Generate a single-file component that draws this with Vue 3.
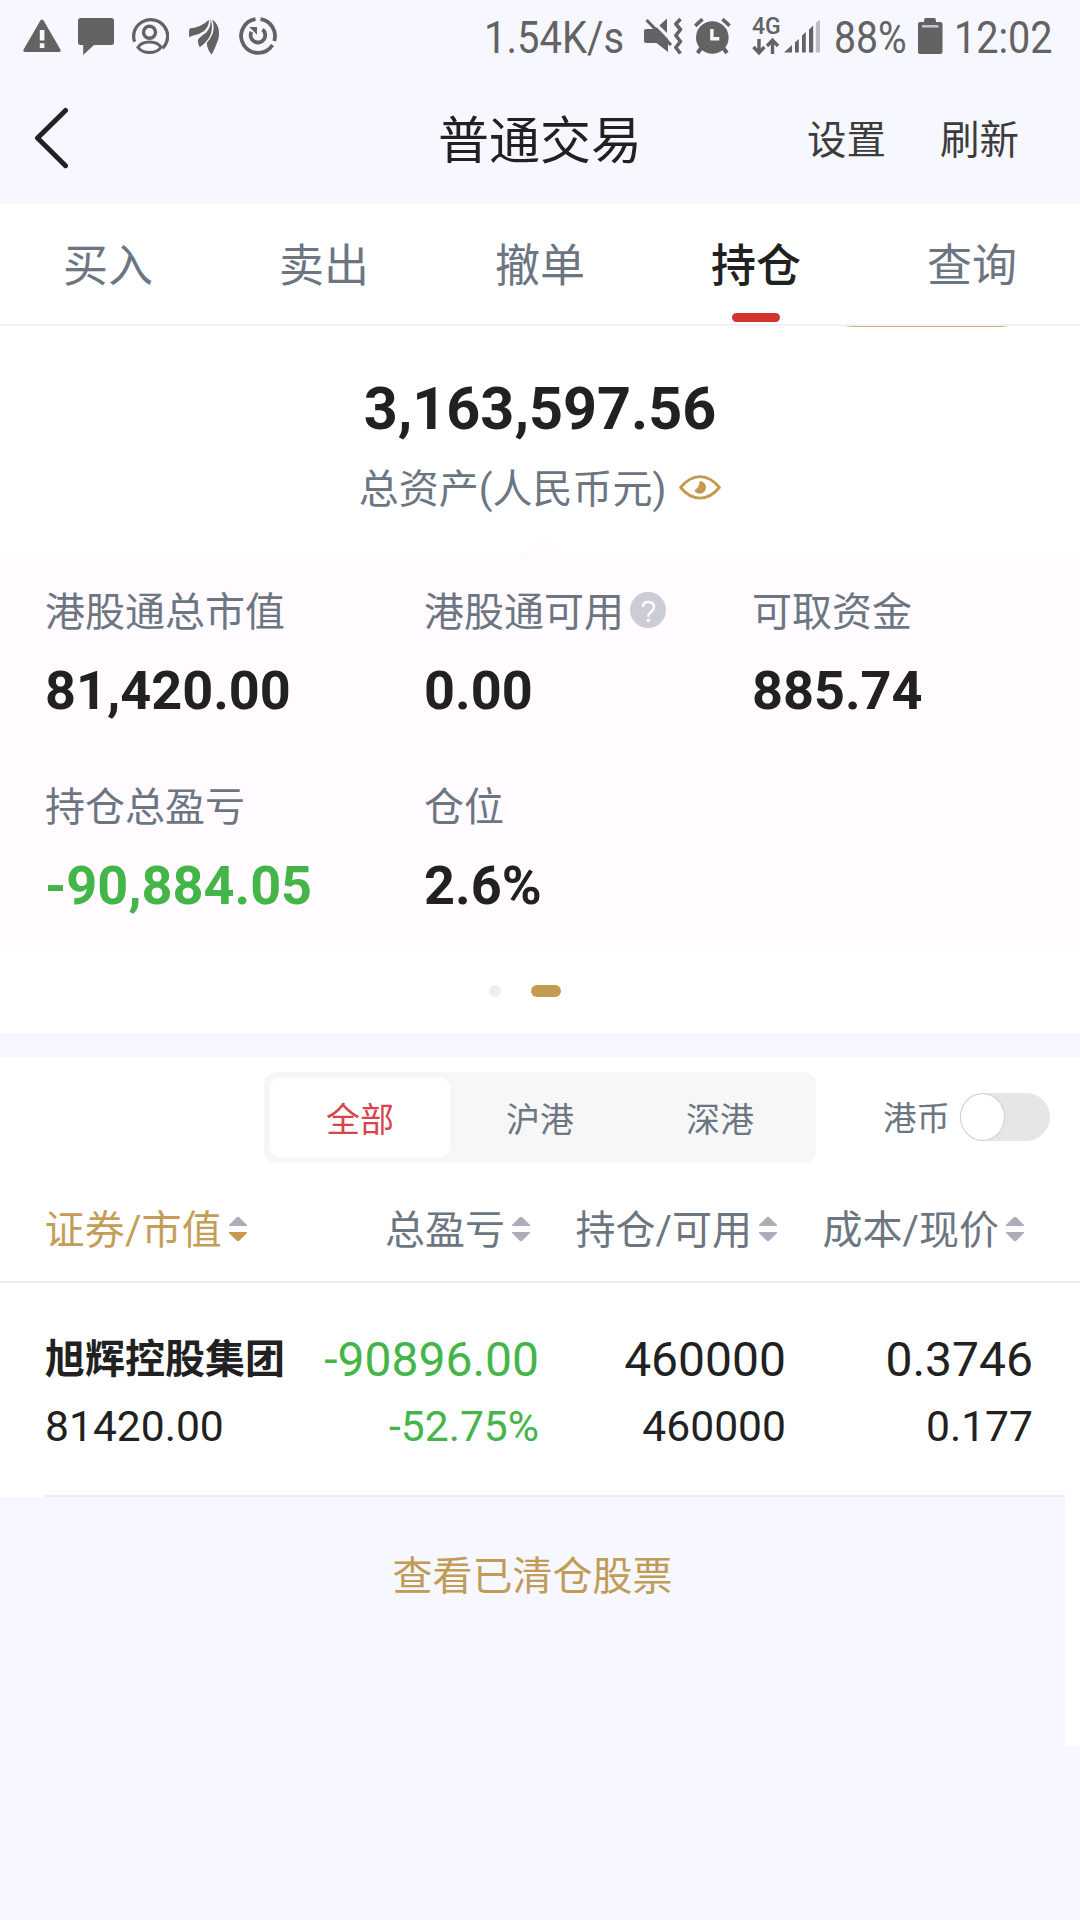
<script setup>
const tabs = ['买入', '卖出', '撤单', '持仓', '查询']
const activeTab = '持仓'
const metrics = [
  { label: '港股通总市值', value: '81,420.00' },
  { label: '港股通可用', value: '0.00', help: true },
  { label: '可取资金', value: '885.74' },
  { label: '持仓总盈亏', value: '-90,884.05', down: true },
  { label: '仓位', value: '2.6%' },
]
const markets = ['全部', '沪港', '深港']
const columns = ['证券/市值', '总盈亏', '持仓/可用', '成本/现价']
</script>

<template>
  <div class="page">
    <div class="status">
      <div class="status-left">
        <svg class="ic-warn" width="38" height="34" viewBox="0 0 38 34">
          <path d="M19 0.5 Q20 0.5 20.6 1.6 L37.4 30.6 Q38.4 33 36.2 33 H1.8 Q-.4 33 .6 30.6 L17.4 1.6 Q18 .5 19 .5Z" fill="#636363" />
          <path d="M16.8 11h4.6v10.600h-4.600zM16.800 24.300h4.600v4.600h-4.600z" fill="#f7f7ff" />
        </svg>
        <svg class="ic-chat" width="36" height="37" viewBox="0 0 36 37">
          <path d="M2.500 0H33.500Q36 0 36 2.500V24.500Q36 27 33.500 27H16L5.200 37V27H2.500Q0 27 0 24.500V2.500Q0 0 2.500 0Z" fill="#636363" />
        </svg>
        <svg class="ic-user" width="38" height="37" viewBox="0 0 38 37" fill="none" stroke="#636363">
          <path d="M3.600 23.800A17 16.600 0 1 1 31.500 30.200" stroke-width="3.300" />
          <circle cx="18.500" cy="14.300" r="6" stroke-width="3.400" />
          <path d="M7 29.300Q10 24 18.500 24T30 29.300Q26 34.500 18.500 34.500T7 29.300Z" stroke-width="3" />
        </svg>
        <svg class="ic-leaf" width="31" height="36" viewBox="0 0 31 36" fill="#636363">
          <path d="M.4 18.600Q-.4 13 .6 9.600Q13 8 19.800.8Q20.600 7 14.800 12.200Q10 15.500 4.500 16.500Q1.400 17.200.4 18.600Z" />
          <path d="M21.200 0Q23 7 17.200 13.500Q8.800 19.500 8.800 21.500Q8.800 25 10.800 28.200Q19.800 22 22.300 13.500Q24 5 21.200 0Z" />
          <path d="M23.200.6Q25.800 7 23.700 14.500Q21.500 20 17.800 23.800Q18 31 22.800 35.600Q28 25 29.600 19Q31.600 6 23.200.6Z" />
        </svg>
        <svg class="ic-sync" width="38" height="38" viewBox="0 0 38 38" fill="none" stroke="#636363">
          <path d="M16.500 2.100A17 17 0 1 0 33.500 28" stroke-width="3.800" />
          <path d="M21.500 2.100A17 17 0 0 1 35.200 24" stroke-width="3.800" />
          <path d="M23.500 12.500A7.300 7.300 0 1 1 12.500 14.800" stroke-width="3.800" />
          <path d="M10.200 10H18V17.800Z" fill="#636363" stroke="none" />
        </svg>
      </div>
      <div class="status-right">
        <span class="st st-speed">1.54K/s</span>
        <svg class="ic-mute" width="39" height="37" viewBox="0 0 39 37">
          <path d="M0 13Q0 11 2 11H8L13 9.500L24 21V34L12.500 25H2Q0 25 0 23Z" fill="#636363" />
          <path d="M23 .5V15L15.300 7.500Z" fill="#636363" />
          <path d="M2.500 2L27 27" stroke="#636363" stroke-width="3.200" />
          <path d="M36.500 1L31.800 6L36.500 11.500L31.800 17.500L36.500 23.500L31.800 29.500L36.500 35.500" fill="none" stroke="#636363" stroke-width="3.600" stroke-linejoin="round" />
        </svg>
        <svg class="ic-alarm" width="37" height="37" viewBox="0 0 37 37">
          <circle cx="18.300" cy="19.500" r="16.300" fill="#636363" />
          <path d="M1.200 7.800L8.500 1.200M28.500 1.200L35.600 7.800" stroke="#636363" stroke-width="3.600" />
          <path d="M8 29L3.500 35M28.500 29L33 35" stroke="#636363" stroke-width="4" />
          <path d="M17.900 11V20.700H25.300" fill="none" stroke="#f7f7ff" stroke-width="3.400" />
        </svg>
        <div class="net">
          <span class="g4">4G</span>
          <svg width="28" height="19" viewBox="0 0 28 19" fill="none" stroke="#636363" stroke-width="3.400">
            <path d="M7 2V15M1.500 10L7 15.800L12.500 10M20.500 17V4M15 9L20.500 3.200L26 9" />
          </svg>
        </div>
        <svg class="ic-signal" width="37" height="36" viewBox="0 0 37 36" fill="#636363">
          <path d="M0 34.500L8 27V34.500ZM11 24.500L14.800 21V34.500H11ZM18 17.500L21.800 14V34.500H18ZM25 11.500L29.200 7.500V34.500H25Z" />
          <path d="M31.800 4.500L36 2V34.500H31.800Z" fill="#bdbdc1" />
        </svg>
        <span class="st st-pct">88%</span>
        <svg class="ic-bat" width="25" height="36" viewBox="0 0 25 36">
          <path d="M7.500 0H16.500Q18 0 18 4H22.500Q24.500 4 24.500 6V34Q24.500 36 22.500 36H2Q0 36 0 34V6Q0 4 2 4H6Q6 0 7.500 0Z" fill="#636363" />
          <path d="M4 7H20.500V9.600H4Z" fill="#c4c4c8" />
        </svg>
        <span class="st st-time">12:02</span>
      </div>
    </div>

    <header class="head">
      <svg class="back" width="36" height="64" viewBox="0 0 36 64" fill="none" stroke="#222" stroke-width="5" stroke-linecap="round" stroke-linejoin="round">
        <path d="M31.500 4.500L3.500 32L31.500 59.700" />
      </svg>
      <h1>普通交易</h1>
      <div class="actions"><span>设置</span><span>刷新</span></div>
    </header>

    <nav class="tabs">
      <div v-for="t in tabs" :key="t" class="tab" :class="{ active: t === activeTab }">
        <span>{{ t }}</span>
      </div>
    </nav>
    <div class="peek"></div>

    <section class="total">
      <div class="amount">3,163,597.56</div>
      <div class="caption">
        <span>总资产(人民币元)</span>
        <svg width="42" height="25" viewBox="0 0 42 25">
          <path d="M1.600 12.500Q10.500 1.600 21 1.600T40.400 12.500Q31.500 23.200 21 23.200T1.600 12.500Z" fill="none" stroke="#c49a50" stroke-width="2.800" stroke-linejoin="round" />
          <path d="M20.500 6.300A6.200 6.200 0 1 1 15.300 15.200Q20.500 12.500 20.500 6.300Z" fill="#c49a50" />
        </svg>
      </div>
      <svg class="notch" width="36" height="17" viewBox="0 0 36 17"><path d="M0 17L15.500 1.500Q18 -.5 20.500 1.500L36 17Z" fill="#fffbff" /></svg>
    </section>

    <section class="metrics">
      <div v-for="m in metrics" :key="m.label" class="metric">
        <div class="label">{{ m.label }}<i v-if="m.help" class="help">
          <svg width="36" height="36" viewBox="0 0 36 36">
            <circle cx="18" cy="18" r="18" fill="#cbccd5" />
            <path d="M12.800 15Q12.800 10 18.300 10T24 15Q24 17.500 21 20Q18.300 22 18.300 24.800" fill="none" stroke="#fff" stroke-width="2.400" />
            <circle cx="18.300" cy="28.300" r="1.800" fill="#fff" />
          </svg>
        </i></div>
        <div class="value" :class="{ down: m.down }">{{ m.value }}</div>
      </div>
    </section>

    <div class="dots"><i class="dot"></i><i class="dot on"></i></div>
    <div class="band"></div>

    <section class="filter">
      <div class="seg">
        <span v-for="(m, i) in markets" :key="m" :class="{ on: i === 0 }">{{ m }}</span>
      </div>
      <span class="hkd">港币</span>
      <div class="switch"><i></i></div>
    </section>

    <div class="cols">
      <div v-for="(c, i) in columns" :key="c" class="col" :class="{ sorted: i === 0 }">
        <span>{{ c }}</span>
        <svg width="18" height="26" viewBox="0 0 18 26">
          <path d="M0 10V9L7.500 1.500Q9 .2 10.500 1.500L18 9V10Z" fill="#acadb9" />
          <path d="M0 16V17L7.500 24.500Q9 25.800 10.500 24.500L18 17V16Z" :fill="i === 0 ? '#c49a50' : '#acadb9'" />
        </svg>
      </div>
    </div>

    <div class="row">
      <div class="cell name"><b>旭辉控股集团</b><small>81420.00</small></div>
      <div class="cell loss"><span>-90896.00</span><small>-52.75%</small></div>
      <div class="cell"><span>460000</span><small>460000</small></div>
      <div class="cell"><span>0.3746</span><small>0.177</small></div>
    </div>
    <div class="rest">
      <div class="cleared">查看已清仓股票</div>
    </div>
  </div>
</template>

<style>
body { margin: 0; background: #f7f7ff; }
</style>

<style scoped>
.page {
  width: 1080px; height: 1920px; overflow: hidden; background: #f7f7ff; color: #212121;
  font-family: Roboto, "Noto Sans CJK SC", sans-serif;
}
svg { display: block; flex: none; }
.status { height: 74px; display: flex; justify-content: space-between; color: #636363; }
.status-left, .status-right { display: flex; align-items: flex-start; }
.status-left { padding-left: 23px; }
.ic-warn { margin-top: 19px; }
.ic-chat { margin: 18px 0 0 17px; }
.ic-user { margin: 18px 0 0 17px; }
.ic-leaf { margin: 19px 0 0 20px; }
.ic-sync { margin: 17px 0 0 19px; }
.st {
  font-size: 44px; line-height: 44px; margin-top: 16px; display: block;
  white-space: nowrap; transform-origin: 0 50%; transform: scaleX(.9); flex: none;
}
.st-speed { width: 160px; transform: scaleX(.908); }
.ic-mute { margin: 18px 0 0 0; }
.ic-alarm { margin: 18px 0 0 11px; }
.net { width: 28px; margin: 17px 0 0 21px; flex: none; }
.g4 { display: block; font-size: 23px; font-weight: 500; line-height: 20px; width: 28px; }
.ic-signal { margin: 18px 0 0 4px; }
.st-pct { width: 84px; margin-left: 13px; transform: scaleX(.89); }
.ic-bat { margin: 18px 0 0 0; }
.st-time { width: 126px; margin-left: 11px; }

.head { height: 130px; display: grid; grid-template-columns: 1fr auto 1fr; align-items: center; }
.back { margin: 0 0 2px 34px; }
.head h1 { margin: 6px 0 0; font-size: 51px; line-height: 60px; font-weight: 400; width: 204px; text-align: center; white-space: nowrap; }
.actions { display: flex; justify-content: flex-end; gap: 54px; padding-right: 61px; font-size: 39.500px; line-height: 50px; color: #3c3c3c; padding-top: 3px; }

.tabs { height: 120px; background: #fff; display: flex; border-bottom: 2px solid #f1f1f9; }
.tab { flex: 1; display: flex; flex-direction: column; align-items: center; font-size: 45px; line-height: 60px; padding-top: 33px; color: #6c7682; }
.tab.active { color: #212121; font-weight: 500; }
.tab.active::after { content: ""; width: 48px; height: 9px; border-radius: 5px; background: #d43430; margin-top: 16px; }
.peek { height: 1px; background: linear-gradient(90deg, #fff 844px, #cdb06e 852px, #cdb06e 1001px, #fff 1010px); }

.total { height: 227px; background: #fff; display: flex; flex-direction: column; align-items: center; }
.amount { font-size: 59.300px; font-weight: 700; line-height: 70px; margin-top: 47px; }
.caption { display: flex; align-items: center; gap: 13px; font-size: 40px; line-height: 50px; color: #6c7682; margin-top: 21px; margin-left: 0; }
.caption svg { margin-bottom: 5px; }
.notch { margin-top: auto; margin-left: 2px; }

.metrics {
  height: 396px; box-sizing: border-box; background: #fffbff; padding: 34px 0 0 45px;
  display: grid; grid-template-columns: 379px 328px 1fr; grid-auto-rows: 195px;
}
.label { display: flex; align-items: center; font-size: 40px; line-height: 50px; height: 50px; color: #6c7682; }
.help { margin: 0 0 7px 6px; }
.value { font-size: 54px; line-height: 60px; font-weight: 700; margin-top: 23px; }
.down { color: #43b549; }

.dots { height: 83px; background: #fff; display: flex; gap: 30px; padding-left: 489px; box-sizing: border-box; padding-top: 35px; }
.dot { width: 12px; height: 12px; border-radius: 6px; background: #eeeef6; }
.dot.on { width: 30px; background: #c49a50; }
.band { height: 24px; background: #f7f7ff; }

.filter { height: 121px; background: #fff; display: flex; align-items: flex-start; }
.seg { margin: 15px 0 0 264px; width: 552px; height: 91px; box-sizing: border-box; padding: 6px; border-radius: 12px; background: #f7f7f7; display: flex; }
.seg span { flex: 1; text-align: center; font-size: 34px; line-height: 84px; height: 79px; color: #6c7682; border-radius: 9px; }
.seg .on { background: #fff; color: #d9444a; }
.hkd { font-size: 33.500px; line-height: 50px; color: #6c7682; margin: 37px 0 0 67px; }
.switch { width: 90px; height: 48px; border-radius: 24px; background: #e6e6e6; margin: 36px 0 0 10px; }
.switch i { display: block; width: 45px; height: 48px; box-sizing: border-box; border: 1px solid #cfcfcf; border-radius: 50%; background: #fff; }

.cols { height: 105px; box-sizing: border-box; background: #fff; border-bottom: 2px solid #ececee; display: grid; grid-template-columns: 247px 283px 247px 247px; }
.col { display: flex; align-items: flex-start; justify-content: flex-end; gap: 7px; font-size: 40px; line-height: 50px; color: #6c7682; padding-top: 28px; white-space: nowrap; }
.col svg { margin-top: 10px; }
.col.sorted { color: #c49e58; }
.col.sorted span { letter-spacing: .2px; }

.row { height: 214px; box-sizing: border-box; background: #fff; display: grid; grid-template-columns: 255px 239px 247px 247px; padding: 47px 0 0 45px; position: relative; }
.row::after { content: ""; position: absolute; left: 45px; right: 15px; bottom: 0; height: 2px; background: #ededf3; }
.cell { display: flex; flex-direction: column; align-items: flex-end; font-size: 48px; line-height: 60px; white-space: nowrap; }
.cell b { font-size: 40px; font-weight: 700; line-height: 60px; }
.cell small { font-size: 42.600px; line-height: 50px; margin-top: 11px; }
.name { align-items: flex-start; }
.loss { color: #43b549; }

.rest { height: 249px; box-sizing: border-box; border-right: 15px solid #fff; padding-top: 55px; }
.cleared { text-align: center; font-size: 40px; line-height: 50px; color: #c09c57; }
</style>
